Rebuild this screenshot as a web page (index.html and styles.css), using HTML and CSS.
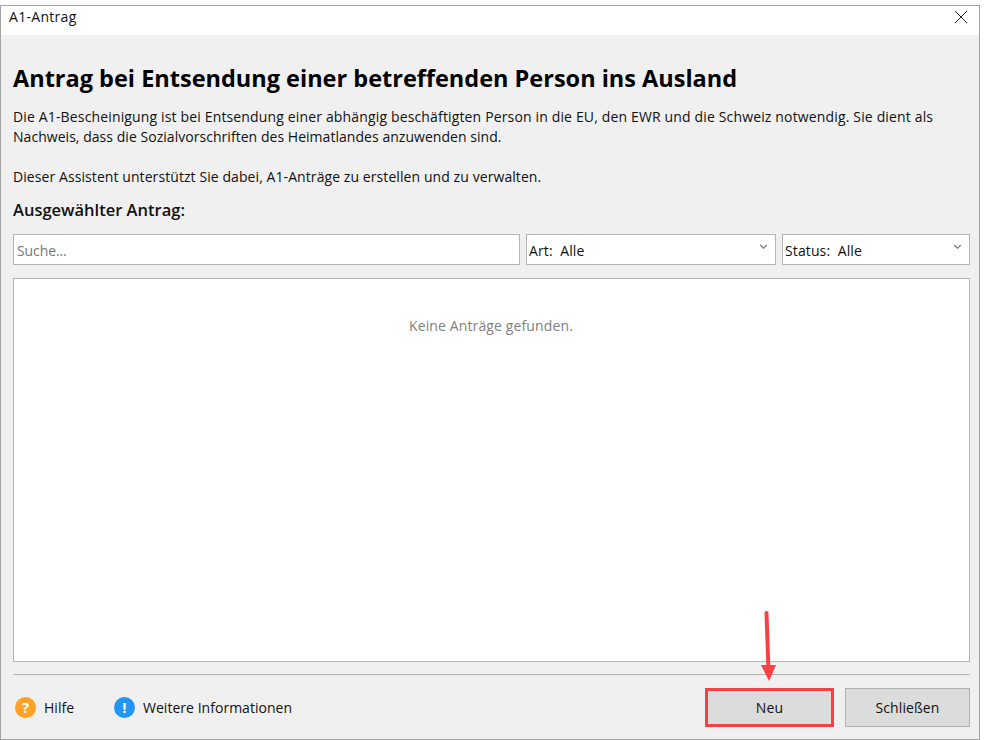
FILE: index.html
```html
<!DOCTYPE html>
<html lang="de">
<head>
<meta charset="utf-8">
<title>A1-Antrag</title>
<link rel="stylesheet" href="styles.css">
</head>
<body>
<div class="window">
  <header class="titlebar">
    <span class="title">A1-Antrag</span>
    <svg class="close" width="14" height="14" viewBox="0 0 14 14"><path d="M1 1L13 13M13 1L1 13" stroke="#222" stroke-width="1" fill="none"/></svg>
  </header>
  <main class="content">
    <h1 class="heading">Antrag bei Entsendung einer betreffenden Person ins Ausland</h1>
    <p class="intro">Die A1-Bescheinigung ist bei Entsendung einer abhängig beschäftigten Person in die EU, den EWR und die Schweiz notwendig. Sie dient als<br><span class="tight">Nachweis, dass die Sozialvorschriften des Heimatlandes anzuwenden sind.</span></p>
    <p class="intro assist">Dieser Assistent unterstützt Sie dabei, A1-Anträge zu erstellen und zu verwalten.</p>
    <h2 class="subheading">Ausgewählter Antrag:</h2>
    <div class="filters">
      <div class="field search">Suche...</div>
      <div class="field select art"><span>Art:&nbsp; Alle</span><svg width="9" height="6" viewBox="0 0 9 6"><path d="M1.2 1L4.5 4.2L7.8 1" stroke="#777" stroke-width="1.2" fill="none"/></svg></div>
      <div class="field select status"><span>Status:&nbsp; Alle</span><svg width="9" height="6" viewBox="0 0 9 6"><path d="M1.2 1L4.5 4.2L7.8 1" stroke="#777" stroke-width="1.2" fill="none"/></svg></div>
    </div>
    <div class="list"><span class="empty">Keine Anträge gefunden.</span></div>
    <footer class="footer">
      <a class="link help"><span class="badge orange">?</span>Hilfe</a>
      <a class="link info"><span class="badge blue">!</span>Weitere Informationen</a>
      <span class="spacer"></span>
      <button class="btn new">Neu</button>
      <button class="btn">Schließen</button>
    </footer>
  </main>
  <svg class="arrow" width="24" height="74" viewBox="0 0 24 74"><path d="M10.5 2L12.5 60" stroke="#f94045" stroke-width="4" stroke-linecap="round" fill="none"/><path d="M5 54L20 54L13 70Z" fill="#f94045"/></svg>
</div>
</body>
</html>
```
FILE: styles.css
```css
* { box-sizing: border-box; }
html, body { margin: 0; padding: 0; background: #fff; }
body { padding-top: 5px; font-family: "Open Sans", "Noto Sans", sans-serif; color: #111; }
.window { position: relative; width: 980px; height: 735px; border: 1px solid #a3a3a3; display: flex; flex-direction: column; background: #f0f0f0; }
.titlebar { height: 29px; background: #fff; display: flex; align-items: flex-start; justify-content: space-between; padding: 2px 11px 0 8px; flex: none; }
.title { font-size: 14px; line-height: 17px; letter-spacing: 0.3px; }
.close { margin-top: 2px; }
.content { flex: 1; display: flex; flex-direction: column; padding: 26px 9px 12px 12px; }
.heading { margin: 0; font-size: 23.5px; line-height: 34px; font-weight: 700; color: #000; letter-spacing: 0; white-space: nowrap; }
.intro { margin: 12px 0 0; font-size: 14px; line-height: 20px; letter-spacing: 0.15px; white-space: nowrap; }
.tight { letter-spacing: 0.04px; }
.assist { margin-top: 20px; letter-spacing: 0.08px; }
.subheading { margin: 12px 0 0; font-size: 16.5px; line-height: 22px; font-weight: 600; letter-spacing: 0; }
.filters { display: flex; gap: 6px; margin-top: 13px; flex: none; }
.field { height: 31px; background: #fff; border: 1px solid #b4b4b4; font-size: 14px; line-height: 31px; letter-spacing: 0.12px; padding: 0 3px; }
.search { width: 507px; color: #777; letter-spacing: -0.1px; }
.select { display: flex; justify-content: space-between; align-items: flex-start; padding-right: 7px; padding-left: 2px; }
.select svg { margin-top: 9px; }
.art { width: 250px; }
.status { width: 188px; }
.list { margin-top: 13px; width: 957px; height: 384px; background: #fff; border: 1px solid #b4b4b4; display: flex; justify-content: center; padding-top: 37px; flex: none; }
.empty { font-size: 14px; line-height: 20px; letter-spacing: 0.12px; color: #7f7f7f; margin-left: -1px; }
.footer { flex: none; display: flex; align-items: center; margin-top: 12px; border-top: 1px solid #b4b4b4; padding-top: 13px; width: 957px; }
.link { display: flex; align-items: center; font-size: 14px; letter-spacing: 0.03px; }
.help { margin-left: 2px; width: 99px; }
.badge { width: 21px; height: 21px; border-radius: 50%; color: #fff; font-weight: 700; font-size: 15px; line-height: 21px; text-align: center; margin-right: 8px; flex: none; }
.orange { background: #ffa126; }
.blue { background: #2196f8; }
.spacer { flex: 1; }
.btn { width: 125px; height: 39px; background: #dcdcdc; border: 1px solid #b0b0b0; font: inherit; font-size: 14px; letter-spacing: 0.1px; color: #111; margin-left: 11px; padding: 0; }
.new { width: 129px; border: 3px solid #f94045; margin-left: 0; }
.arrow { position: absolute; left: 755px; top: 605px; }
```
